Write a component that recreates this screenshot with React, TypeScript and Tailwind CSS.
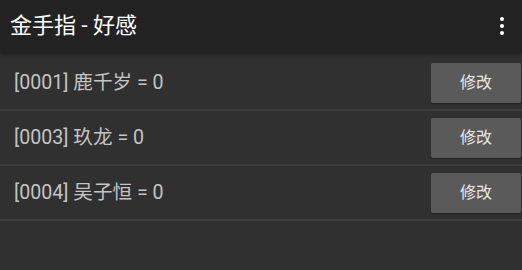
const rows = [
  { id: "0001", name: "鹿千岁", value: 0 },
  { id: "0003", name: "玖龙", value: 0 },
  { id: "0004", name: "吴子恒", value: 0 },
];

export default function App() {
  return (
    <div
      className="flex h-[270px] w-[522px] flex-col overflow-hidden bg-[#303030]"
      style={{ fontFamily: 'Roboto, "Noto Sans CJK SC", sans-serif' }}
    >
      <header className="relative z-10 flex h-[52px] shrink-0 items-center justify-between bg-[#222222] pl-[10px] pr-[14px] shadow-[0_2px_4px_rgba(0,0,0,0.45)]">
        <h1 className="text-[22px] leading-none text-white">金手指 - 好感</h1>
        <button className="flex flex-col items-center gap-[3px] px-1 py-1">
          <span className="h-[4px] w-[4px] rounded-full bg-white" />
          <span className="h-[4px] w-[4px] rounded-full bg-white" />
          <span className="h-[4px] w-[4px] rounded-full bg-white" />
        </button>
      </header>
      <div className="flex flex-col pt-[4px]">
        {rows.map((row) => (
          <div
            key={row.id}
            className="flex h-[55px] items-center justify-between border-b-2 border-[#3d3d3d] pl-[14px] pr-[1px]"
          >
            <span className="text-[19.6px] text-[#c4c4c4]">
              [{row.id}] {row.name} = {row.value}
            </span>
            <button className="h-[40px] w-[90px] rounded-[2px] bg-[#5a5a5a] text-[16px] text-[#e8e8e8] shadow-[0_1px_1px_rgba(0,0,0,0.3)]">
              修改
            </button>
          </div>
        ))}
      </div>
    </div>
  );
}
